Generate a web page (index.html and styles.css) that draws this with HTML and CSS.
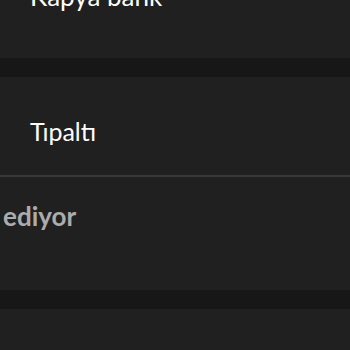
FILE: index.html
```html
<!DOCTYPE html>
<html lang="tr">
<head>
    <meta charset="UTF-8">
    <meta name="viewport" content="width=device-width, initial-scale=1.0">
    <title>Bankalar</title>
    <link rel="stylesheet" href="styles.css">
</head>
<body>
    <div class="group group-first">
        <div class="row row-top">Kapya bank</div>
    </div>

    <div class="gap"></div>

    <div class="group">
        <div class="row row-main">Tıpaltı</div>
        <div class="divider"></div>
        <div class="row row-sub">ediyor</div>
    </div>

    <div class="gap"></div>

    <div class="group group-last"></div>
</body>
</html>
```

FILE: styles.css
```css
* {
    margin: 0;
    padding: 0;
    box-sizing: border-box;
}

body {
    font-family: Lato, 'Noto Sans', sans-serif;
    background: #202020;
    color: #fff;
    height: 350px;
    overflow: hidden;
}

.group {
    background: #202020;
}

.group-first {
    margin-top: -61px;
}

.row {
    font-size: 25px;
    line-height: 30px;
    padding-left: 30px;
}

.row-top {
    font-size: 26px;
    padding-top: 42px;
    padding-bottom: 47px;
}

.row-main {
    padding-top: 39px;
    height: 98px;
}

.divider {
    height: 2px;
    background: #393939;
}

.row-sub {
    font-size: 26px;
    font-weight: 700;
    color: #acacac;
    padding-left: 3px;
    padding-top: 24px;
    height: 113px;
}

.gap {
    height: 19px;
    background: #171717;
}

.group-last {
    height: 40px;
}
```
